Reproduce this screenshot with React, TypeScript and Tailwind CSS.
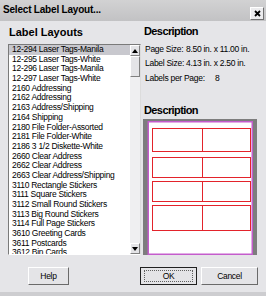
import React from 'react';

const layouts = [
  '12-294 Laser Tags-Manila',
  '12-295 Laser Tags-White',
  '12-296 Laser Tags-Manila',
  '12-297 Laser Tags-White',
  '2160 Addressing',
  '2162 Addressing',
  '2163 Address/Shipping',
  '2164 Shipping',
  '2180 File Folder-Assorted',
  '2181 File Folder-White',
  '2186 3 1/2 Diskette-White',
  '2660 Clear Address',
  '2662 Clear Address',
  '2663 Clear Address/Shipping',
  '3110 Rectangle Stickers',
  '3111 Square Stickers',
  '3112 Small Round Stickers',
  '3113 Big Round Stickers',
  '3114 Full Page Stickers',
  '3610 Greeting Cards',
  '3611 Postcards',
  '3612 Bin Cards',
];

// label rows in the preview: [top, height]
const labelRows: [number, number][] = [
  [9, 23],
  [38, 20],
  [62, 20],
  [86, 25],
];

const ScrollButton: React.FC<{ up?: boolean }> = ({ up }) => (
  <div className="h-[11px] flex items-center justify-center bg-[#e4e4e7] border-t border-l border-t-white border-l-white border-b border-r border-b-[#808080] border-r-[#808080]">
    <svg width="6" height="4" viewBox="0 0 6 4">
      {up ? <polygon points="0,4 6,4 3,0" fill="#000" /> : <polygon points="0,0 6,0 3,4" fill="#000" />}
    </svg>
  </div>
);

const DialogButton: React.FC<{ label: string; isDefault?: boolean; className?: string }> = ({ label, isDefault, className }) => (
  <div
    className={
      'h-[18px] flex items-center justify-center bg-[#e4e4e7] ' +
      (isDefault ? 'border border-[#202020] ' : 'border border-t-white border-l-white border-b-[#6a6a6a] border-r-[#6a6a6a] ') +
      (className ?? '')
    }
  >
    {isDefault ? (
      <div className="w-[49px] h-[12px] flex items-center justify-center border border-dotted border-[#606060]">
        <span className="text-[8.5px] leading-none tracking-[-0.3px]">{label}</span>
      </div>
    ) : (
      <span className="text-[8.5px] leading-none tracking-[-0.3px]">{label}</span>
    )}
  </div>
);

export default function App() {
  return (
    <div className="w-[266px] h-[296px] bg-[#e5e5e8] flex flex-col overflow-hidden text-black font-['Liberation_Sans',Arial,sans-serif]">
      {/* title bar */}
      <div className="h-[21px] flex items-start justify-between pl-[3px] pr-[2px] bg-linear-to-b from-[#d2d2d3] to-[#c2c2c4]">
        <span className="mt-[4px] text-[10px] leading-[12px] font-bold tracking-[-0.2px]">Select Label Layout...</span>
        <div className="mt-[7px] w-[14px] h-[13px] flex items-center justify-center bg-[#ececee] border border-t-white border-l-white border-b-[#707070] border-r-[#707070]">
          <svg width="7" height="7" viewBox="0 0 7 7">
            <path d="M1 1 L6 6 M6 1 L1 6" stroke="#000" strokeWidth="1.8" />
          </svg>
        </div>
      </div>

      <div className="flex">
        {/* left column */}
        <div className="w-[141px] pl-[8px] flex flex-col">
          <div className="h-[23px] flex items-center pl-[1px] text-[11px] font-bold">Label Layouts</div>
          <div className="w-[133px] h-[211px] flex bg-white border border-t-[#7a7a7a] border-l-[#7a7a7a] border-b-white border-r-[#dcdcdc]">
            <div className="flex-1 overflow-hidden">
              {layouts.map((name, i) => (
                <div
                  key={name}
                  className={
                    'h-[9.7px] leading-[9.7px] pl-[3px] text-[8.5px] tracking-[-0.28px] whitespace-nowrap ' +
                    (i === 0 ? 'bg-[#c8c8ce]' : '')
                  }
                >
                  {name}
                </div>
              ))}
            </div>
            <div className="w-[10px] flex flex-col">
              <ScrollButton up />
              <div className="h-[21px] bg-[#e4e4e7] border-t border-l border-t-white border-l-white border-b border-r border-b-[#808080] border-r-[#808080]" />
              <div className="flex-1 bg-[#efeff1]" />
              <ScrollButton />
            </div>
          </div>
        </div>

        {/* right column */}
        <div className="flex-1 pl-[2px] flex flex-col">
          <div className="h-[21px] flex items-center pl-[1px] text-[11px] font-bold tracking-[-0.6px]">Description</div>
          <div className="pl-[2px] text-[8.5px] tracking-[-0.28px] leading-[14.4px] whitespace-nowrap">
            <div className="flex">
              <span className="w-[41px]">Page Size:</span>
              <span>8.50 in. x 11.00 in.</span>
            </div>
            <div className="flex">
              <span className="w-[41px]">Label Size:</span>
              <span>4.13 in. x 2.50 in.</span>
            </div>
            <div className="flex">
              <span className="w-[70px]">Labels per Page:</span>
              <span>8</span>
            </div>
          </div>
          <div className="mt-[18px] h-[14px] leading-[14px] pl-[1px] text-[11px] font-bold tracking-[-0.6px]">Description</div>
          <div className="mt-[2px] w-[114px] h-[136px]">
            <svg width="114" height="136" viewBox="0 0 114 136">
              <rect x="0" y="0" width="114" height="136" fill="#7d7d7d" />
              <rect x="5.25" y="2.75" width="104" height="132.5" fill="#fff" stroke="#c45ccc" strokeWidth="1.5" />
              {labelRows.map(([y, h]) => (
                <g key={y}>
                  <rect x="9.5" y={y + 0.5} width="50" height={h} fill="none" stroke="#e3232b" />
                  <rect x="59.5" y={y + 0.5} width="48" height={h} fill="none" stroke="#e3232b" />
                </g>
              ))}
            </svg>
          </div>
        </div>
      </div>

      {/* buttons */}
      <div className="mt-[12px] flex">
        <DialogButton label="Help" className="ml-[28px] w-[41px]" />
        <DialogButton label="OK" isDefault className="ml-[71px] w-[57px]" />
        <DialogButton label="Cancel" className="ml-[4px] w-[57px]" />
      </div>

      <div className="mt-auto h-[4px] bg-[#cdcdd0]" />
    </div>
  );
}
